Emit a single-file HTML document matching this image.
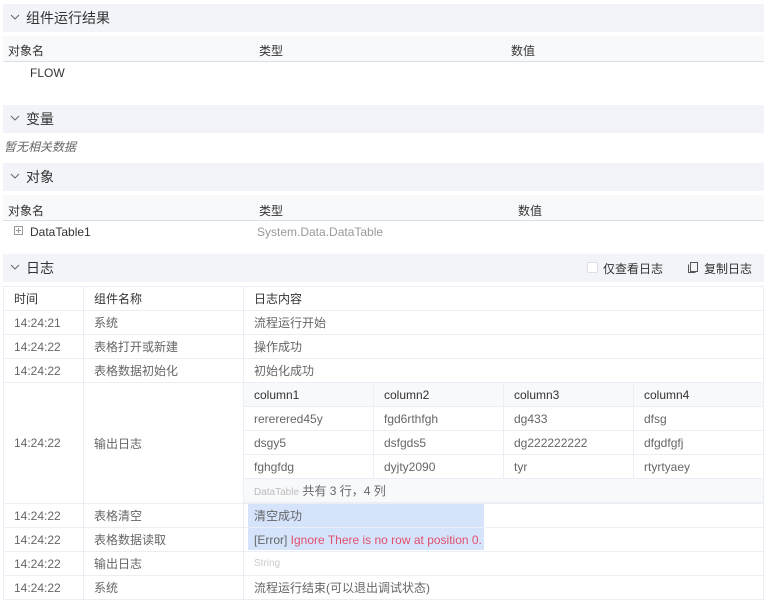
<!DOCTYPE html><html><head><meta charset="utf-8"><style>
*{box-sizing:border-box;margin:0;padding:0}
body{width:768px;height:603px;background:#fff;font-family:"Liberation Sans","Noto Sans CJK SC",sans-serif;font-size:12px;color:#333;position:relative;overflow:hidden}
.a{position:absolute;white-space:nowrap}
.hd{position:absolute;left:3px;width:761px;height:28px;background:#f2f4f9;font-size:14px;line-height:28px;padding-left:23px}
.hd svg{position:absolute;left:7px;top:9px}
.th{position:absolute;left:3px;width:761px;height:26px;background:#f8f9fb;border-bottom:1px solid #dcdfe6}
.g{color:#666}
table{position:absolute;border-collapse:collapse}
td{border:1px solid #ebeef5;height:24px;padding:0 10px;color:#666;white-space:nowrap}
</style></head><body>
<div class="hd" style="top:4px"><svg width="10" height="8"><path d="M1 2l4 4 4-4" stroke="#666" fill="none"/></svg>组件运行结果</div>
<div class="th" style="top:36px"></div>
<div class="a" style="left:8px;top:42px">对象名</div><div class="a" style="left:259px;top:42px">类型</div><div class="a" style="left:511px;top:42px">数值</div>
<div class="a" style="left:30px;top:66px">FLOW</div>
<div class="hd" style="top:105px"><svg width="10" height="8"><path d="M1 2l4 4 4-4" stroke="#666" fill="none"/></svg>变量</div>
<div class="a g" style="left:4px;top:138px;font-style:italic">暂无相关数据</div>
<div class="hd" style="top:163px"><svg width="10" height="8"><path d="M1 2l4 4 4-4" stroke="#666" fill="none"/></svg>对象</div>
<div class="th" style="top:195px"></div>
<div class="a" style="left:8px;top:202px">对象名</div><div class="a" style="left:259px;top:202px">类型</div><div class="a" style="left:518px;top:202px">数值</div>
<svg class="a" style="left:14px;top:226px" width="10" height="10"><rect x=".5" y=".5" width="8" height="8" fill="none" stroke="#999"/><path d="M2 4.5h5M4.5 2v5" stroke="#999"/></svg>
<div class="a" style="left:30px;top:225px">DataTable1</div><div class="a" style="left:257px;top:225px;color:#999">System.Data.DataTable</div>
<div class="hd" style="top:254px"><svg width="10" height="8"><path d="M1 2l4 4 4-4" stroke="#666" fill="none"/></svg>日志</div>
<div class="a" style="left:587px;top:262px;width:11px;height:11px;border:1px solid #dcdfe6;background:#fff;border-radius:2px"></div>
<div class="a" style="left:603px;top:260px">仅查看日志</div>
<svg class="a" style="left:688px;top:262px" width="11" height="11"><rect x="2.5" y=".5" width="7" height="9" fill="none" stroke="#555"/><path d="M.5 2.5v8h7" stroke="#555" fill="none"/></svg>
<div class="a" style="left:704px;top:260px">复制日志</div>
<div class="a" style="left:248px;top:503px;width:236px;height:47px;background:#d6e4fb"></div>
<table style="left:3px;top:286px;width:761px">
<tr><td style="width:80px;color:#333">时间</td><td style="width:160px;color:#333">组件名称</td><td style="color:#333">日志内容</td></tr>
<tr><td>14:24:21</td><td>系统</td><td>流程运行开始</td></tr>
<tr><td>14:24:22</td><td>表格打开或新建</td><td>操作成功</td></tr>
<tr><td>14:24:22</td><td>表格数据初始化</td><td>初始化成功</td></tr>
<tr><td style="height:120px">14:24:22</td><td>输出日志</td><td style="padding:0"><div style="height:120px"></div></td></tr>
<tr><td>14:24:22</td><td>表格清空</td><td style="position:relative"><span style="position:relative">清空成功</span></td></tr>
<tr><td>14:24:22</td><td>表格数据读取</td><td><span style="position:relative">[Error] <span style="color:#e0506e">Ignore There is no row at position 0.</span></span></td></tr>
<tr><td>14:24:22</td><td>输出日志</td><td style="color:#ccc;font-size:10px">String</td></tr>
<tr><td>14:24:22</td><td>系统</td><td>流程运行结束(可以退出调试状态)</td></tr>
</table>
<table style="left:243px;top:382px;width:521px">
<tr style="background:#f8f9fb"><td style="width:130px;color:#333">column1</td><td style="width:130px;color:#333">column2</td><td style="width:130px;color:#333">column3</td><td style="color:#333">column4</td></tr>
<tr><td>rererered45y</td><td>fgd6rthfgh</td><td>dg433</td><td>dfsg</td></tr>
<tr><td>dsgy5</td><td>dsfgds5</td><td>dg222222222</td><td>dfgdfgfj</td></tr>
<tr><td>fghgfdg</td><td>dyjty2090</td><td>tyr</td><td>rtyrtyaey</td></tr>
<tr style="background:#f8f9fb"><td colspan="4"><span style="color:#bbb;font-size:10px">DataTable</span> 共有 3 行，4 列</td></tr>
</table>
</body></html>
